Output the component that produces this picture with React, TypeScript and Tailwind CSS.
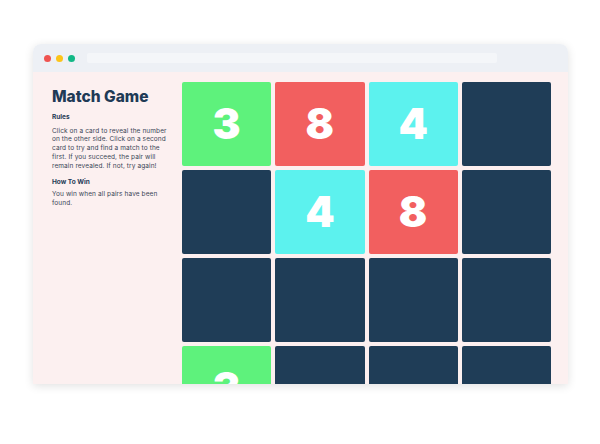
const CARDS: { value?: number; color: string }[] = [
  { value: 3, color: 'bg-[#5ef27c]' },
  { value: 8, color: 'bg-[#f25f5f]' },
  { value: 4, color: 'bg-[#5cf2ee]' },
  { color: 'bg-[#1f3d57]' },
  { color: 'bg-[#1f3d57]' },
  { value: 4, color: 'bg-[#5cf2ee]' },
  { value: 8, color: 'bg-[#f25f5f]' },
  { color: 'bg-[#1f3d57]' },
  { color: 'bg-[#1f3d57]' },
  { color: 'bg-[#1f3d57]' },
  { color: 'bg-[#1f3d57]' },
  { color: 'bg-[#1f3d57]' },
  { value: 3, color: 'bg-[#5ef27c]' },
  { color: 'bg-[#1f3d57]' },
  { color: 'bg-[#1f3d57]' },
  { color: 'bg-[#1f3d57]' },
];

export default function App() {
  return (
    <div className="w-[600px] h-[444px] bg-white pt-[44px] pl-[33px] overflow-hidden font-['Inter',sans-serif]">
      {/* Browser window */}
      <div className="w-[535px] h-[340px] rounded-t-[8px] overflow-hidden flex flex-col shadow-[0_2px_10px_rgba(0,0,0,0.12)]">
        {/* Title bar */}
        <div className="h-[28px] shrink-0 bg-[#edf0f5] flex items-center pl-[11px] pr-[71px] gap-[5px]">
          <span className="w-[7px] h-[7px] rounded-full bg-[#ef5350]" />
          <span className="w-[7px] h-[7px] rounded-full bg-[#fcc419]" />
          <span className="w-[7px] h-[7px] rounded-full bg-[#12b886]" />
          <div className="ml-[7px] flex-1 h-[10px] rounded-[2px] bg-[#f4f6f9]" />
        </div>

        {/* Content */}
        <div className="flex-1 bg-[#fcf0f0] flex overflow-hidden">
          <aside className="w-[149px] shrink-0 pl-[19px] pt-[15px] text-[#1f3a56]">
            <h1 className="text-[15.5px] leading-[20px] font-extrabold">Match Game</h1>
            <p className="mt-[6px] text-[6.5px] leading-[8.7px] font-bold">Rules</p>
            <p className="mt-[5px] text-[6.5px] leading-[8.7px] tracking-[0.1px] text-[#3a4556] whitespace-nowrap">
              Click on a card to reveal the number
              <br />
              on the other side. Click on a second
              <br />
              card to try and find a match to the
              <br />
              first. If you succeed, the pair will
              <br />
              remain revealed. If not, try again!
            </p>
            <p className="mt-[7.5px] text-[6.5px] leading-[8.7px] font-bold">How To Win</p>
            <p className="mt-[3.5px] text-[6.5px] leading-[8.7px] tracking-[0.1px] text-[#3a4556]">
              You win when all pairs have been
              <br />
              found.
            </p>
          </aside>

          <div className="flex-1 pt-[10px] pr-[17px]">
            <div className="grid grid-cols-4 gap-[4px] auto-rows-[84px]">
              {CARDS.map((card, i) => (
                <div
                  key={i}
                  className={`${card.color} rounded-[2px] flex items-center justify-center text-white text-[42px] font-black leading-none`}
                >
                  {card.value ?? ''}
                </div>
              ))}
            </div>
          </div>
        </div>
      </div>
    </div>
  );
}
